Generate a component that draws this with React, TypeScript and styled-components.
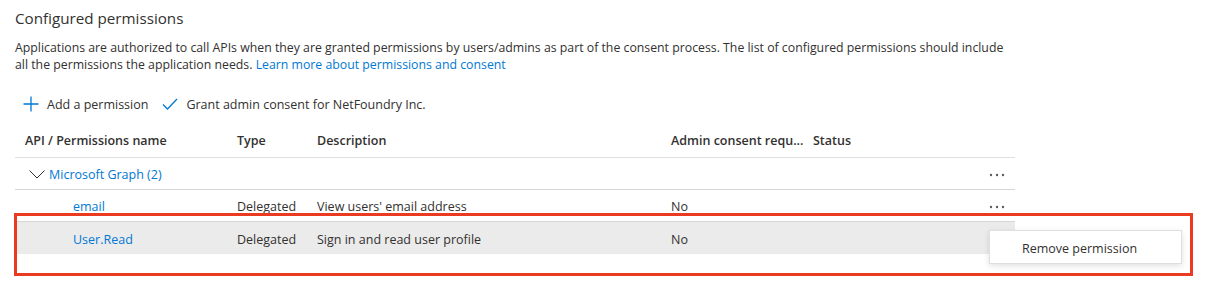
import * as React from "react";
import styled, { createGlobalStyle } from "styled-components";

interface Permission {
  name: string;
  type: string;
  description: string;
  adminConsent: string;
  selected?: boolean;
}

const permissions: Permission[] = [
  { name: "email", type: "Delegated", description: "View users' email address", adminConsent: "No" },
  { name: "User.Read", type: "Delegated", description: "Sign in and read user profile", adminConsent: "No", selected: true },
];

const GlobalStyle = createGlobalStyle`
  html, body {
    margin: 0;
    padding: 0;
    background: #ffffff;
  }
  body {
    font-family: "Segoe UI", "Open Sans", "Noto Sans", sans-serif;
    color: #323130;
    font-size: 12.5px;
  }
`;

const Page = styled.div`
  position: relative;
  padding: 6px 15px 0 15px;
  width: 1180px;
  height: 286px;
  box-sizing: border-box;
`;

const Title = styled.h2`
  margin: 0;
  font-size: 15.2px;
  font-weight: 400;
  line-height: 24px;
`;

const Intro = styled.p`
  margin: 9px 0 0 0;
  width: 1000px;
  line-height: 17px;
  font-size: 12.3px;
`;

const Link = styled.a`
  color: #0078d4;
  text-decoration: none;
`;

const Toolbar = styled.div`
  display: flex;
  align-items: center;
  gap: 14px;
  height: 32px;
  margin-top: 15px;
  padding-left: 8px;
`;

const ToolButton = styled.button`
  display: flex;
  align-items: center;
  gap: 8px;
  border: none;
  background: none;
  padding: 0;
  font-family: inherit;
  font-size: 12.5px;
  color: #323130;
  cursor: pointer;
`;

const Table = styled.div`
  width: 1000px;
  margin-top: 4px;
`;

const Row = styled.div<{ $header?: boolean; $selected?: boolean }>`
  display: grid;
  grid-template-columns: 212px 80px 354px 142px 1fr 40px;
  align-items: center;
  box-sizing: border-box;
  height: ${(p) => (p.$header ? 34 : 32)}px;
  padding-top: ${(p) => (p.$header ? 0 : 2)}px;
  border-bottom: 1px solid ${(p) => (p.$header ? "#e1dfdd" : "#d8d6d4")};
  background: ${(p) => (p.$selected ? "#ebebeb" : "transparent")};
  font-weight: ${(p) => (p.$header ? 600 : 400)};
  font-size: 12.5px;
`;

const LastRow = styled(Row)`
  border-bottom: none;
`;

const Cell = styled.div<{ $indent?: number }>`
  padding-left: ${(p) => 10 + (p.$indent ?? 0)}px;
  white-space: nowrap;
  overflow: hidden;
`;

const GroupCell = styled.div`
  grid-column: 1 / 6;
  display: flex;
  align-items: center;
  gap: 4px;
  padding-left: 14px;
  color: #0078d4;
`;

const More = styled.div`
  display: flex;
  justify-content: flex-end;
  padding-right: 10px;
`;

const Highlight = styled.div`
  position: absolute;
  left: 14px;
  top: 213px;
  width: 1173px;
  height: 57px;
  border: 3px solid #ea3a1f;
  pointer-events: none;
`;

const Menu = styled.div`
  position: absolute;
  left: 989px;
  top: 230px;
  width: 193px;
  height: 34px;
  box-sizing: border-box;
  padding: 2px 0 0 32px;
  background: #ffffff;
  border: 1px solid #e1dfdd;
  box-shadow: 0 2px 6px rgba(0, 0, 0, 0.12);
  display: flex;
  align-items: center;
  font-size: 12.5px;
  color: #323130;
`;

const PlusIcon = () => (
  <svg width="16" height="16" viewBox="0 0 16 16">
    <path d="M8 0.5V15.5M0.5 8H15.5" stroke="#0078d4" strokeWidth="1.3" fill="none" />
  </svg>
);

const CheckIcon = () => (
  <svg width="16" height="14" viewBox="0 0 16 14">
    <path d="M1 7.5L5.5 12L15 2" stroke="#0078d4" strokeWidth="1.3" fill="none" />
  </svg>
);

const ChevronIcon = () => (
  <svg width="16" height="9" viewBox="0 0 16 9">
    <path d="M0.5 0.5L8 8L15.5 0.5" stroke="#323130" strokeWidth="1" fill="none" />
  </svg>
);

const DotsIcon = () => (
  <svg width="16" height="4" viewBox="0 0 16 4">
    <circle cx="2" cy="2" r="1.2" fill="#605e5c" />
    <circle cx="8" cy="2" r="1.2" fill="#605e5c" />
    <circle cx="14" cy="2" r="1.2" fill="#605e5c" />
  </svg>
);

const App: React.FC = () => {
  return (
    <>
      <GlobalStyle />
      <Page>
        <Title>Configured permissions</Title>
        <Intro>
          Applications are authorized to call APIs when they are granted permissions by users/admins as part of the
          consent process. The list of configured permissions should include all the permissions the application
          needs. <Link href="#">Learn more about permissions and consent</Link>
        </Intro>
        <Toolbar>
          <ToolButton>
            <PlusIcon />
            Add a permission
          </ToolButton>
          <ToolButton>
            <CheckIcon />
            Grant admin consent for NetFoundry Inc.
          </ToolButton>
        </Toolbar>
        <Table>
          <Row $header>
            <Cell>API / Permissions name</Cell>
            <Cell>Type</Cell>
            <Cell>Description</Cell>
            <Cell>Admin consent requ...</Cell>
            <Cell>Status</Cell>
            <div />
          </Row>
          <Row>
            <GroupCell>
              <ChevronIcon />
              Microsoft Graph (2)
            </GroupCell>
            <More>
              <DotsIcon />
            </More>
          </Row>
          {permissions.map((perm, i) => {
            const R = i === permissions.length - 1 ? LastRow : Row;
            return (
              <R key={perm.name} $selected={perm.selected}>
                <Cell $indent={48}>
                  <Link href="#">{perm.name}</Link>
                </Cell>
                <Cell>{perm.type}</Cell>
                <Cell>{perm.description}</Cell>
                <Cell>{perm.adminConsent}</Cell>
                <Cell />
                <More>{perm.selected ? null : <DotsIcon />}</More>
              </R>
            );
          })}
        </Table>
        <Highlight />
        <Menu>Remove permission</Menu>
      </Page>
    </>
  );
};

export default App;
